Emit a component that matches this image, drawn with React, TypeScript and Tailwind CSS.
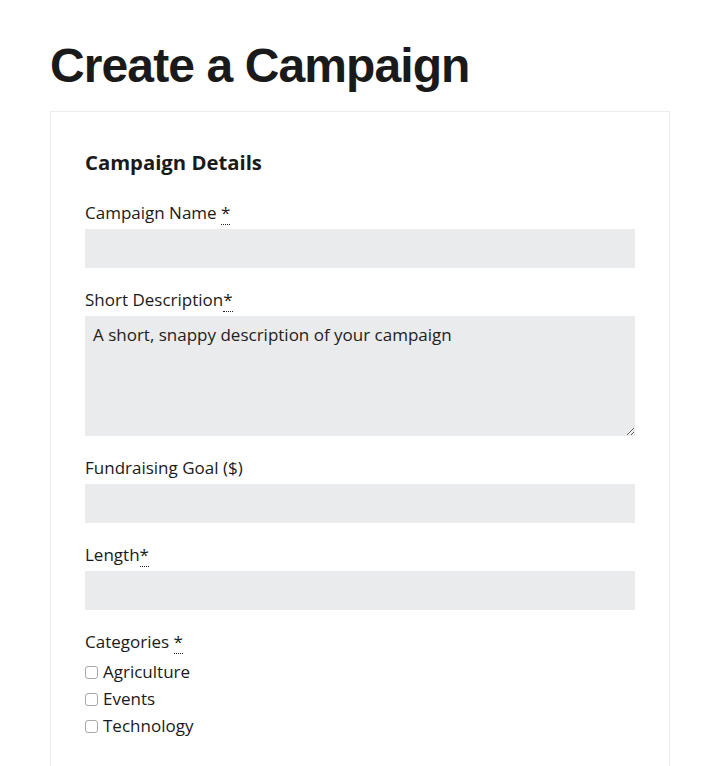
import type { ReactNode } from "react";

const inputClass =
  "block w-full h-[39px] bg-[#eaebec] border-0 outline-none px-2 text-[17px] text-[#222]";

function Req() {
  return (
    <abbr
      title="required"
      className="no-underline border-b border-dotted border-[#222] cursor-help"
    >
      *
    </abbr>
  );
}

function Field({ label, children }: { label: ReactNode; children: ReactNode }) {
  return (
    <div className="mb-[20px]">
      <label className="block text-[17px] leading-[24px] mb-[4px] text-[#1a1a1a]">{label}</label>
      {children}
    </div>
  );
}

export default function App() {
  const categories = ["Agriculture", "Events", "Technology"];

  return (
    <div className="min-h-[766px] overflow-hidden bg-white pl-[50px] pr-[54px] pt-[38px] font-['Open_Sans',sans-serif] text-[#1a1a1a]">
      <h1 className="font-['Liberation_Sans',Arial,sans-serif] font-bold text-[48px] leading-[56px] tracking-[-0.9px] text-[#1a1a1a] mb-[17px]">
        Create a Campaign
      </h1>

      <div className="border border-[#ececec] border-b-0 px-[34px] pt-[36px] pb-[40px]">
        <h2 className="text-[20.3px] font-bold leading-7 mb-[25px]">Campaign Details</h2>

        <Field label={<>Campaign Name <Req /></>}>
          <input type="text" className={inputClass} />
        </Field>

        <Field label={<>Short Description<Req /></>}>
          <textarea
            className="block w-full h-[120px] bg-[#eaebec] border-0 outline-none px-2 py-[6px] text-[17px] leading-[26px] text-[#222] placeholder:text-[#222]"
            placeholder="A short, snappy description of your campaign"
          />
        </Field>

        <Field label="Fundraising Goal ($)">
          <input type="text" className={inputClass} />
        </Field>

        <Field label={<>Length<Req /></>}>
          <input type="text" className={inputClass} />
        </Field>

        <div>
          <label className="block text-[17px] leading-[24px] mb-[4px]">
            Categories <Req />
          </label>
          <div className="flex flex-col">
            {categories.map((c) => (
              <label key={c} className="flex items-center h-[27px] text-[17px]">
                <span className="inline-block w-[13px] h-[13px] mt-[2px] mr-[5px] rounded-[3px] border border-[#a8a8a8] bg-white" />
                {c}
              </label>
            ))}
          </div>
        </div>
      </div>
    </div>
  );
}
